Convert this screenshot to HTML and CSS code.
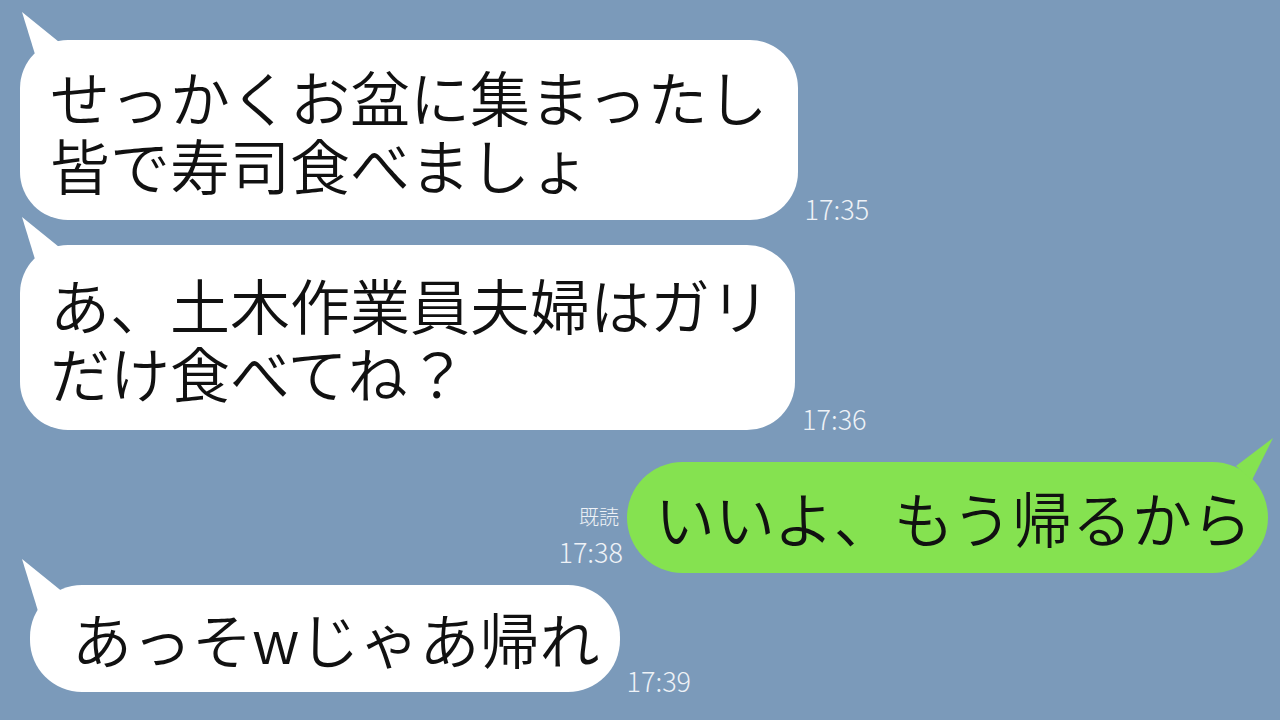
FILE: index.html
```html
<!DOCTYPE html>
<html lang="ja">
<head>
    <meta charset="UTF-8">
    <meta name="viewport" content="width=device-width, initial-scale=1.0">
    <title>トーク</title>
    <link rel="stylesheet" href="styles.css">
</head>
<body>

    <div class="chat">
        <div class="row row-first">
            <div class="bubble">せっかくお盆に集まったし<br>皆で寿司食べましょ</div>
            <div class="time">17:35</div>
        </div>

        <div class="row row-second">
            <div class="bubble bubble-2">あ、土木作業員夫婦はガリ<br>だけ食べてね？</div>
            <div class="time">17:36</div>
        </div>

        <div class="row row-mine">
            <div class="meta">
                <div class="read">既読</div>
                <div class="time">17:38</div>
            </div>
            <div class="bubble bubble-green">いいよ、もう帰るから</div>
        </div>

        <div class="row row-last">
            <div class="bubble bubble-short">あっそwじゃあ帰れ</div>
            <div class="time">17:39</div>
        </div>
    </div>

</body>
</html>
```

FILE: styles.css
```css
body {
    margin: 0;
    background-color: #7b9aba;
    font-family: 'Noto Sans CJK JP', 'Noto Sans', sans-serif;
    width: 1280px;
    height: 720px;
    overflow: hidden;
}

.chat {
    display: flex;
    flex-direction: column;
    padding-top: 40px;
}

.row {
    display: flex;
    align-items: flex-end;
    padding-left: 20px;
}

.row-second {
    margin-top: 25px;
}

.row-mine {
    margin-top: 32px;
    justify-content: flex-end;
    padding-right: 12px;
}

.row-last {
    margin-top: 12px;
    padding-left: 30px;
}

.bubble {
    position: relative;
    background-color: #ffffff;
    color: #111111;
    font-size: 60px;
    font-weight: 350;
    line-height: 68px;
    white-space: nowrap;
    padding: 22px 30px 22px 30px;
    border-radius: 48px;
}

.bubble-2 {
    padding: 25px 25px 24px 30px;
}

/* tail of the white bubbles (upper left) */
.bubble::before {
    content: "";
    position: absolute;
    left: 0;
    top: -30px;
    width: 44px;
    height: 56px;
    background-color: inherit;
    clip-path: polygon(2px 2px, 44px 36px, 18px 54px);
}

.bubble-short {
    padding: 19px 20px 20px 42px;
    border-radius: 52px;
}

.bubble-short::before {
    left: -10px;
    top: -28px;
}

.bubble-green {
    background-color: #85e250;
    padding: 21px 16px 22px 28px;
    border-radius: 56px;
}

/* tail of the green bubble (upper right) */
.bubble-green::before {
    left: auto;
    right: -6px;
    top: -26px;
    width: 40px;
    height: 46px;
    clip-path: polygon(39px 2px, 2px 30px, 18px 44px);
}

.time {
    color: #eef2f7;
    font-size: 27px;
    font-weight: 300;
    line-height: 40px;
    margin-left: 7px;
    margin-bottom: -9px;
}

.meta {
    display: flex;
    flex-direction: column;
    align-items: flex-end;
    margin-right: 4px;
    margin-bottom: 1px;
}

.meta .time {
    margin-left: 0;
    margin-bottom: 0;
}

.read {
    color: #eef2f7;
    font-size: 20px;
    font-weight: 300;
    line-height: 30px;
    margin-right: 4px;
}
```
